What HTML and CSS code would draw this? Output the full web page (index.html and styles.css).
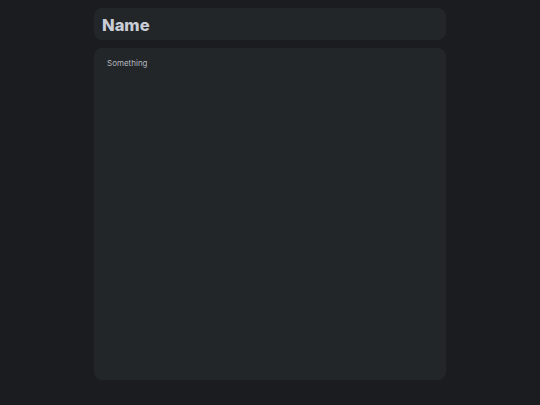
FILE: index.html
```html
<!DOCTYPE html>
<html>
<head>
<meta charset="utf-8">
<link rel="stylesheet" href="styles.css">
</head>
<body>
<div class="page">
  <div class="card title-card"><h1 class="title">Name</h1></div>
  <div class="card body-card"><p class="text">Something</p></div>
</div>
</body>
</html>
```
FILE: styles.css
```css
html, body { margin: 0; padding: 0; background: #1b1c1f; }
body { font-family: Inter, "Noto Sans", sans-serif; }
.page {
  width: 352px;
  margin: 0 auto;
  padding-top: 8px;
  display: flex;
  flex-direction: column;
  gap: 8px;
}
.card { background: #232629; border-radius: 8px; }
.title-card { height: 32px; display: flex; align-items: center; padding: 1px 8px 0; box-sizing: border-box; }
.title { margin: 0; font-size: 16.5px; font-weight: 800; color: #c9cdd6; }
.body-card { height: 332px; padding: 10px 13px; box-sizing: border-box; }
.text { margin: 0; font-size: 8px; color: #b4b8bf; }
```
